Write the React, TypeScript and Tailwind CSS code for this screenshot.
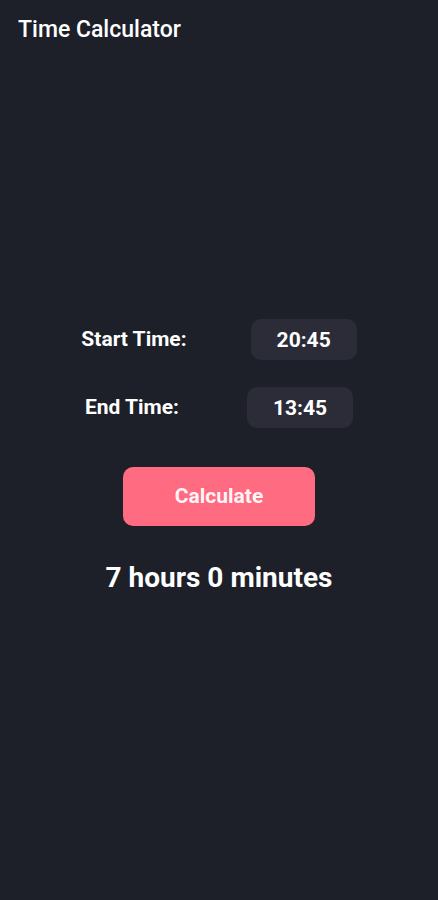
import { useState } from "react"

export default function App() {
  const [start, setStart] = useState("20:45")
  const [end, setEnd] = useState("13:45")

  return (
    <div
      className="w-full h-[900px] bg-[#1d1f29] text-white flex flex-col"
      style={{ fontFamily: "Roboto, 'Noto Sans', sans-serif" }}
    >
      <div className="h-[60px] px-[18px] flex items-center">
        <h1 className="text-[23px] font-medium">Time Calculator</h1>
      </div>

      <div className="flex flex-col items-center mt-[259px]">
        <div className="flex items-center gap-[64px]">
          <span className="text-[21px] font-bold">Start Time:</span>
          <input
            value={start}
            onChange={(e) => setStart(e.target.value)}
            className="w-[106px] h-[41px] rounded-[10px] bg-[#2b2c38] text-center text-[21px] font-bold text-white outline-none"
          />
        </div>
        <div className="flex items-center gap-[68px] mt-[27px]">
          <span className="text-[21px] font-bold">End Time:</span>
          <input
            value={end}
            onChange={(e) => setEnd(e.target.value)}
            className="w-[106px] h-[41px] rounded-[10px] bg-[#2b2c38] text-center text-[21px] font-bold text-white outline-none"
          />
        </div>

        <button className="mt-[39px] w-[192px] h-[59px] rounded-[10px] bg-[#ff6b81] text-[21px] font-bold text-white/95">
          Calculate
        </button>

        <div className="mt-[31px] text-[28px] font-bold">7 hours 0 minutes</div>
      </div>
    </div>
  )
}
